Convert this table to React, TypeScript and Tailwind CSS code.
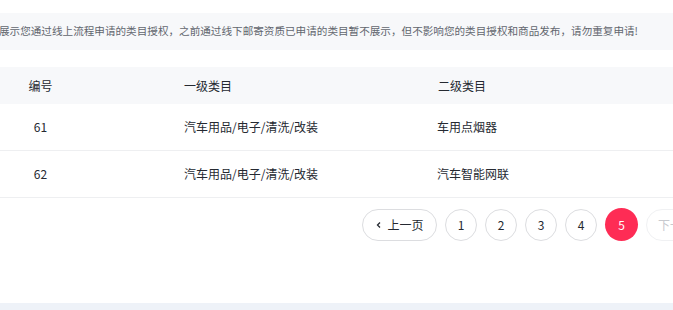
import React from "react";

const font = { fontFamily: '"Noto Sans CJK SC", "Noto Sans", sans-serif' };

const rows = [
  { id: "61", a: "汽车用品/电子/清洗/改装", b: "车用点烟器" },
  { id: "62", a: "汽车用品/电子/清洗/改装", b: "汽车智能网联" },
];

export default function App() {
  return (
    <div className="w-[673px] h-[310px] overflow-hidden bg-white flex flex-col" style={font}>
      <div className="h-[13px]" />
      <div className="h-[37px] bg-[#f7f8fa] flex items-center whitespace-nowrap overflow-hidden">
        <span className="text-[10.6px] text-[#62666e] -ml-[1px] leading-none">
          展示您通过线上流程申请的类目授权，之前通过线下邮寄资质已申请的类目暂不展示，但不影响您的类目授权和商品发布，请勿重复申请!
        </span>
      </div>
      <div className="h-[17px]" />
      <div className="h-[37px] bg-[#f7f8fa] flex items-center text-[12px] text-[#252931]">
        <div className="w-[81px] text-center">编号</div>
        <div className="w-[103px]" />
        <div className="w-[254px]">一级类目</div>
        <div>二级类目</div>
      </div>
      {rows.map((r) => (
        <div
          key={r.id}
          className="h-[47px] border-b border-[#eeeff1] flex items-center text-[12px] text-[#252931]"
        >
          <div className="w-[81px] text-center">{r.id}</div>
          <div className="w-[103px]" />
          <div className="w-[253px]">{r.a}</div>
          <div>{r.b}</div>
        </div>
      ))}
      <div className="flex items-center gap-[8px] pl-[362px] mt-[10px] text-[12px] overflow-hidden">
        <button className="w-[75px] h-[32px] shrink-0 rounded-full border border-[#dcdde0] flex items-center justify-center gap-[4px] text-[#252931] bg-white">
          <svg width="8" height="8" viewBox="0 0 8 8" fill="none">
            <path d="M5 1.5L2.5 4L5 6.5" stroke="#252931" strokeWidth="1.3" />
          </svg>
          <span>上一页</span>
        </button>
        {["1", "2", "3", "4"].map((n) => (
          <button
            key={n}
            className="w-[32px] h-[32px] shrink-0 rounded-full border border-[#dcdde0] flex items-center justify-center text-[#252931] bg-white"
          >
            {n}
          </button>
        ))}
        <button className="w-[33px] h-[33px] shrink-0 rounded-full bg-[#fe2c55] flex items-center justify-center text-white">
          5
        </button>
        <button className="h-[32px] shrink-0 rounded-full border border-[#f0f1f3] flex items-center gap-[4px] pl-[11px] pr-[16px] text-[#c8cacf] bg-white">
          <span>下一页</span>
          <svg width="8" height="8" viewBox="0 0 8 8" fill="none">
            <path d="M3 1.5L5.5 4L3 6.5" stroke="#c8cacf" strokeWidth="1.3" />
          </svg>
        </button>
      </div>
      <div className="flex-1" />
      <div className="h-[7px] bg-[#eef2f8]" />
    </div>
  );
}
